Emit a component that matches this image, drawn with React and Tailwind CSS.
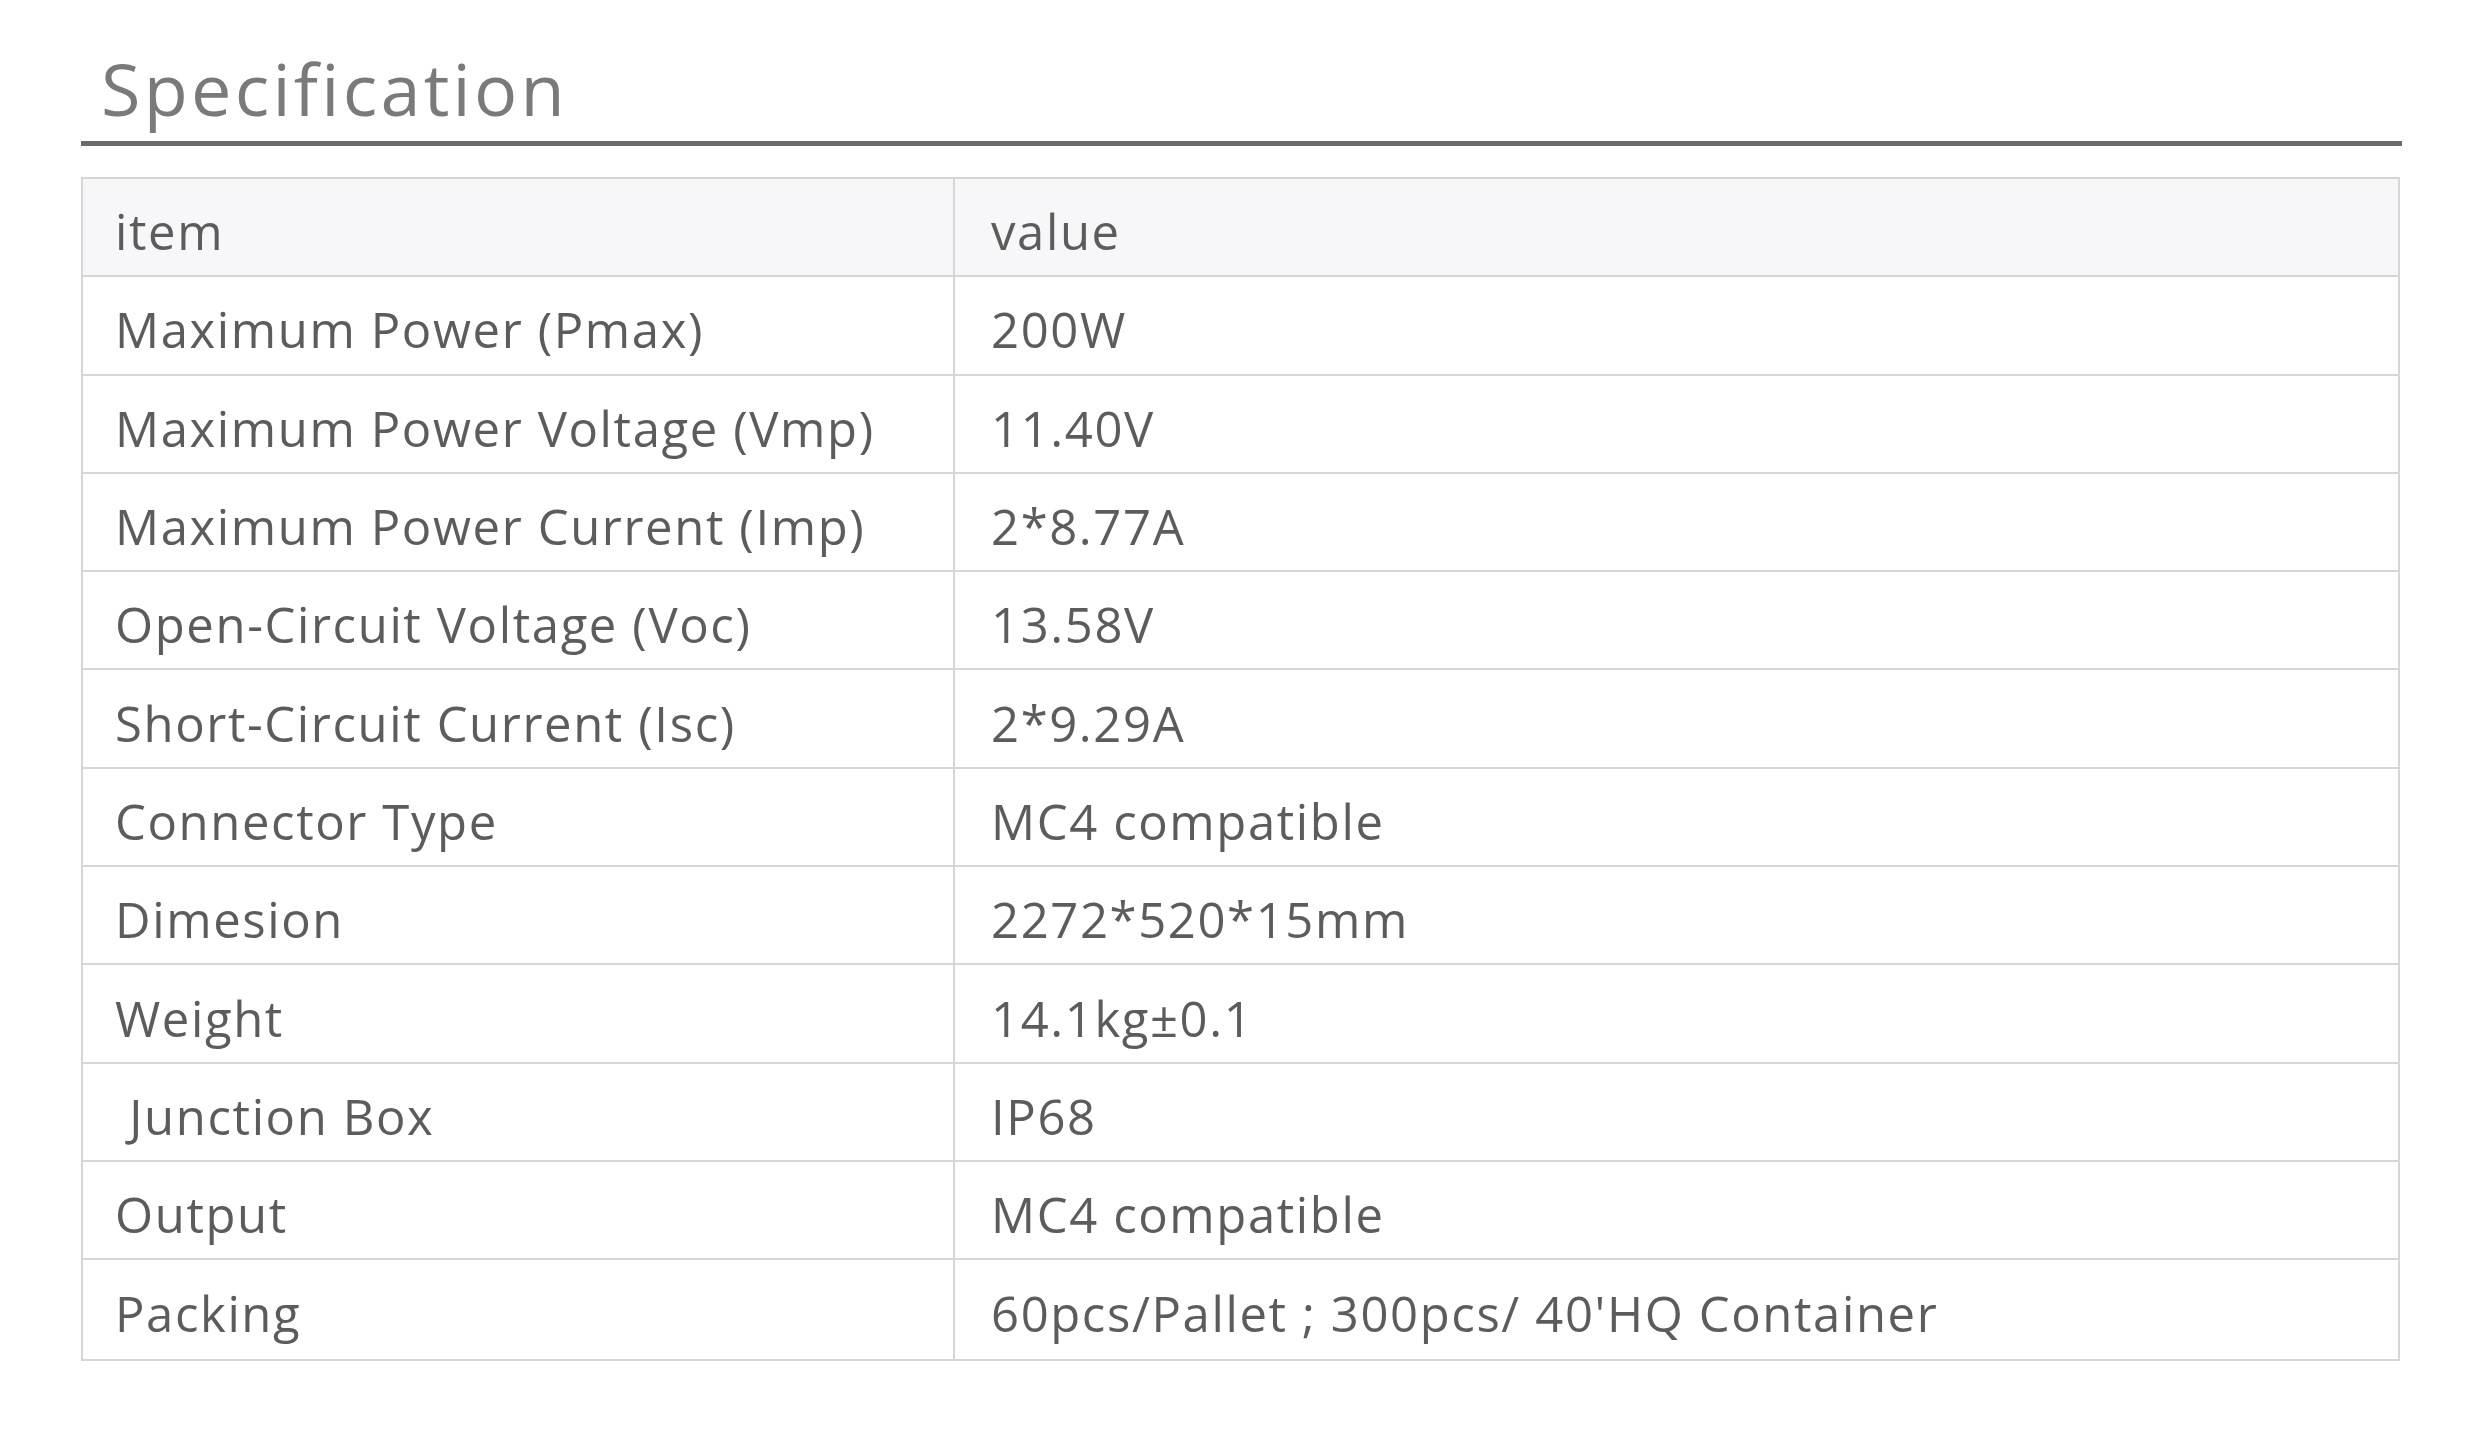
const specs = [
  ['Maximum Power (Pmax)', '200W'],
  ['Maximum Power Voltage (Vmp)', '11.40V'],
  ['Maximum Power Current (Imp)', '2*8.77A'],
  ['Open-Circuit Voltage (Voc)', '13.58V'],
  ['Short-Circuit Current (Isc)', '2*9.29A'],
  ['Connector Type', 'MC4 compatible'],
  ['Dimesion', '2272*520*15mm'],
  ['Weight', '14.1kg±0.1'],
  ['\u00a0Junction Box', 'IP68'],
  ['Output', 'MC4 compatible'],
  ['Packing', "60pcs/Pallet ; 300pcs/ 40'HQ Container"],
]

function Row({ item, value, header, last }) {
  return (
    <div
      className={`grid grid-cols-[872px_1fr] h-[98.3px] ${last ? '' : 'border-b-2 border-[#d6d6d6]'} ${
        header ? 'bg-[#f7f7f9]' : 'bg-white'
      }`}
    >
      <div className="flex items-center pl-[32px] pt-[9px] border-r-2 border-[#d6d6d6] whitespace-pre">
        {item}
      </div>
      <div className="flex items-center pl-[36px] pt-[9px]">{value}</div>
    </div>
  )
}

export default function App() {
  return (
    <div
      className="min-h-screen bg-white"
      style={{ fontFamily: '"Open Sans", "Noto Sans", sans-serif' }}
    >
      <div className="ml-[81px] w-[2321px] pt-[52px]">
        {/* Title */}
        <h2 className="pl-[20px] pb-[17px] text-[72px] leading-[72px] tracking-[0.045em] text-[#7a7a7a] border-b-[5px] border-[#6b6b6b]">
          Specification
        </h2>

        {/* Table */}
        <div className="mt-[31px] mr-[2px] border-2 border-[#d6d6d6] text-[49px] leading-[49px] tracking-[0.033em] text-[#5c5c5c]">
          <Row item="item" value="value" header />
          {specs.map(([item, value], i) => (
            <Row key={i} item={item} value={value} last={i === specs.length - 1} />
          ))}
        </div>
      </div>
    </div>
  )
}
